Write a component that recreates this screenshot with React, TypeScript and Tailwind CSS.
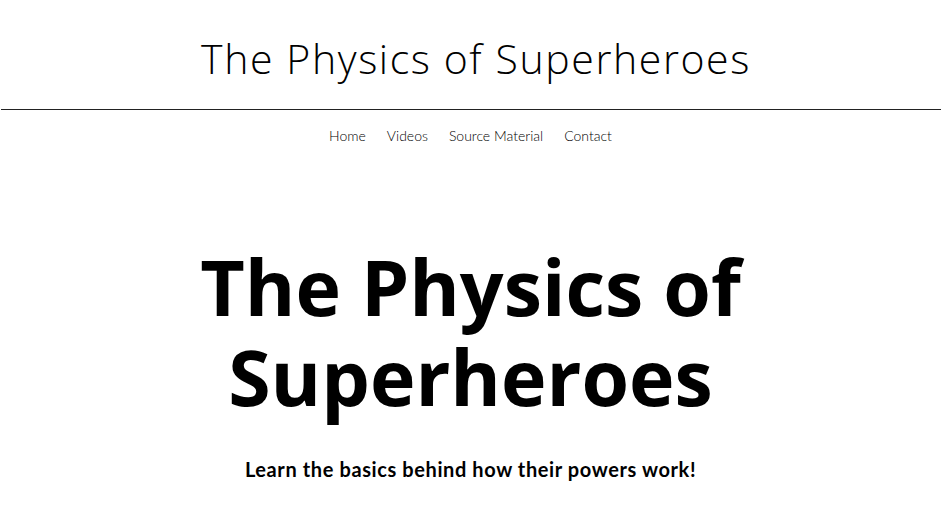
export default function App() {
  return (
    <div className="w-[949px] h-[530px] bg-white overflow-hidden text-black">
      <header className="flex flex-col items-center pt-[33px] h-[109px] w-[949px] pl-[3px]">
        <h1 className="text-[41px] leading-[50px] font-light font-['Open_Sans',sans-serif] tracking-[1.6px]">
          The Physics of Superheroes
        </h1>
      </header>
      <div className="ml-px w-[940px] h-px bg-[#222]" />
      <div className="w-[941px]">
        <nav className="flex justify-center gap-[21px] pt-[16px] text-[14px] leading-[20px] font-light font-['Lato',sans-serif] text-black">
          <span>Home</span>
          <span>Videos</span>
          <span>Source Material</span>
          <span>Contact</span>
        </nav>
        <section className="flex flex-col items-center pt-[96px]">
          <h2 className="text-[77px] leading-[90px] font-bold font-['Open_Sans',sans-serif] text-center">
            <span className="block">The Physics of</span>
            <span className="block">Superheroes</span>
          </h2>
          <p className="mt-[34px] text-[20px] leading-[26px] font-bold font-['Lato',sans-serif] tracking-[0.6px]">
            Learn the basics behind how their powers work!
          </p>
        </section>
      </div>
    </div>
  );
}
